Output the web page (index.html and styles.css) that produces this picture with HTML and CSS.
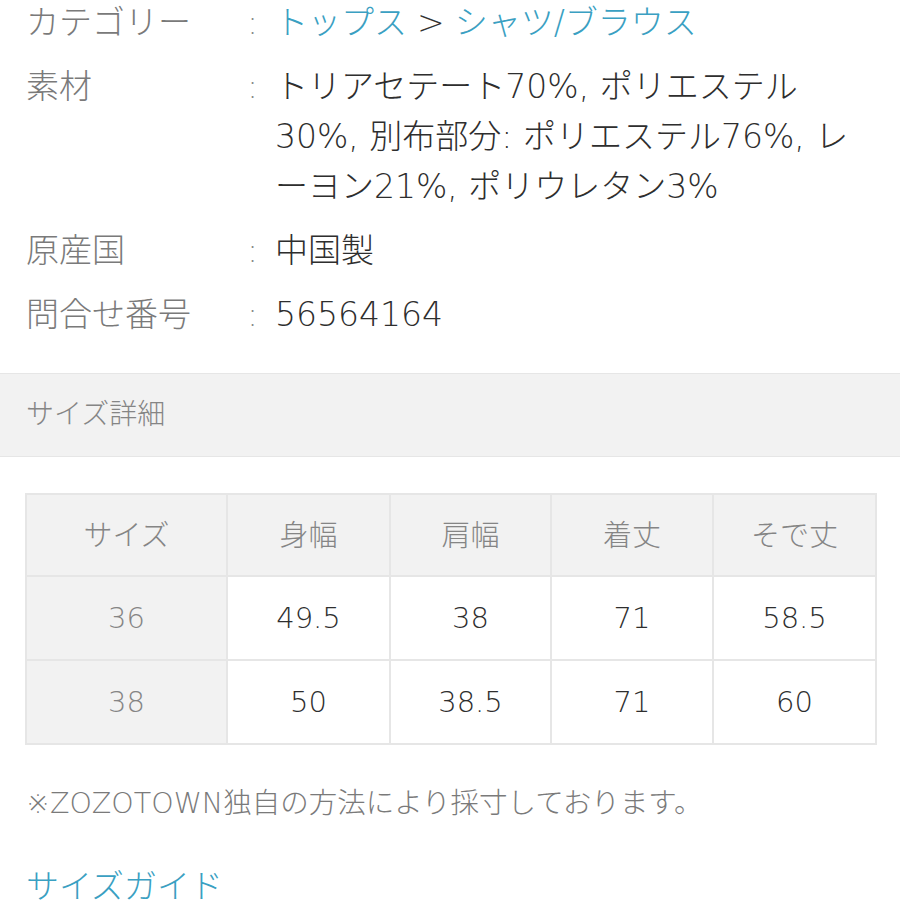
FILE: index.html
```html
<!DOCTYPE html>
<html lang="ja">
<head>
<meta charset="utf-8">
<title>商品情報</title>
<link rel="stylesheet" href="styles.css">
</head>
<body>
<div class="specs">
  <div class="row">
    <div class="label">カテゴリー</div>
    <div class="colon">:</div>
    <div class="value"><a class="link">トップス</a><span class="sep">&gt;</span><a class="link">シャツ/ブラウス</a></div>
  </div>
  <div class="row">
    <div class="label">素材</div>
    <div class="colon">:</div>
    <div class="value">トリアセテート70%, ポリエステル<br>30%, 別布部分: ポリエステル76%, レ<br>ーヨン21%, ポリウレタン3%</div>
  </div>
  <div class="row">
    <div class="label">原産国</div>
    <div class="colon">:</div>
    <div class="value">中国製</div>
  </div>
  <div class="row">
    <div class="label">問合せ番号</div>
    <div class="colon">:</div>
    <div class="value">56564164</div>
  </div>
</div>

<div class="band">サイズ詳細</div>

<table class="size-table">
  <colgroup>
    <col class="c1"><col class="c2"><col class="c3"><col class="c4"><col class="c5">
  </colgroup>
  <thead>
    <tr><th>サイズ</th><th>身幅</th><th>肩幅</th><th>着丈</th><th>そで丈</th></tr>
  </thead>
  <tbody>
    <tr><th>36</th><td>49.5</td><td>38</td><td>71</td><td>58.5</td></tr>
    <tr><th>38</th><td>50</td><td>38.5</td><td>71</td><td>60</td></tr>
  </tbody>
</table>

<p class="note">※ZOZOTOWN独自の方法により採寸しております。</p>

<a class="guide">サイズガイド</a>
</body>
</html>
```

FILE: styles.css
```css
html, body {
  margin: 0;
  padding: 0;
  background: #ffffff;
}
body {
  width: 900px;
  height: 900px;
  overflow: hidden;
  font-family: "DejaVu Sans", "Noto Sans CJK JP", sans-serif;
  font-weight: 300;
  color: #333333;
}
.specs {
  margin-top: -2px;
  display: flex;
  flex-direction: column;
  gap: 14px;
}
.row {
  display: grid;
  grid-template-columns: 221px 28px 1fr;
  padding-left: 26px;
  font-size: 33px;
  line-height: 50px;
}
.label {
  color: #7a7a7a;
}
.colon {
  color: #8a8a8a;
}
.value {
  color: #2e2e2e;
}
.link {
  color: #3aa0c2;
  text-decoration: none;
}
.sep {
  color: #333333;
  margin: 0 10px;
}
.band {
  margin-top: 33px;
  height: 82px;
  background: #f2f2f2;
  border-top: 1px solid #e6e6e6;
  border-bottom: 1px solid #e6e6e6;
  padding-left: 26px;
  font-size: 28px;
  line-height: 82px;
  color: #858585;
}
.size-table {
  margin: 36px 0 0 25px;
  width: 850px;
  border-collapse: collapse;
  table-layout: fixed;
}
.c1 { width: 201px; }
.c2 { width: 163px; }
.c3 { width: 161px; }
.c4 { width: 162px; }
.c5 { width: 163px; }
.size-table th,
.size-table td {
  border: 2px solid #e6e6e6;
  height: 82px;
  padding: 0;
  text-align: center;
  vertical-align: middle;
  font-size: 29px;
  font-weight: 300;
}
.size-table thead th {
  height: 82px;
  padding-bottom: 4px;
  box-sizing: border-box;
}
.size-table th {
  background: #f2f2f2;
  color: #858585;
}
.size-table td {
  background: #ffffff;
  color: #2e2e2e;
}
.note {
  margin: 41px 0 0 26px;
  font-size: 28.5px;
  line-height: 36px;
  color: #7a7a7a;
}
.guide {
  display: block;
  margin: 45px 0 0 26px;
  font-size: 33px;
  line-height: 40px;
  color: #3aa0c2;
}
```
